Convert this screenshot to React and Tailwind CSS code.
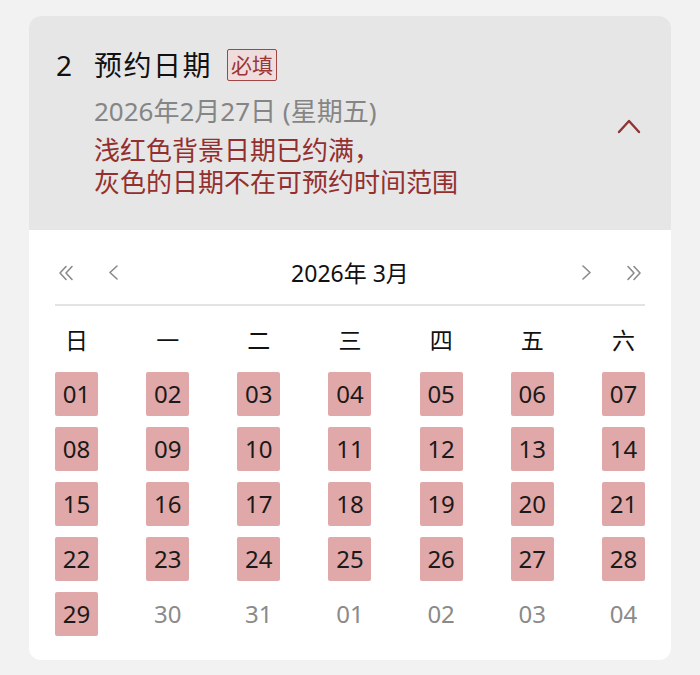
import React from 'react'

const FONT = { fontFamily: '"Noto Sans", "Noto Sans CJK SC", sans-serif' }

const weekdays = ['日', '一', '二', '三', '四', '五', '六']

// 三月的日期，29 之后是不可预约的灰色日期
const rows = [
  ['01', '02', '03', '04', '05', '06', '07'],
  ['08', '09', '10', '11', '12', '13', '14'],
  ['15', '16', '17', '18', '19', '20', '21'],
  ['22', '23', '24', '25', '26', '27', '28'],
  ['29', '30', '31', '01', '02', '03', '04'],
]

function Chevron({ dir = 'left', double = false }) {
  const single = dir === 'left' ? 'M9 1 L2 7.5 L9 14' : 'M2 1 L9 7.5 L2 14'
  return (
    <svg width={double ? 16 : 11} height="16" viewBox={double ? '0 0 16 16' : '0 0 11 16'} fill="none" stroke="#8a8a8a" strokeWidth="1.6" strokeLinecap="round" strokeLinejoin="round">
      {double ? (
        dir === 'left' ? (
          <>
            <path d="M8 1.5 L2 8 L8 14.5" />
            <path d="M14 1.5 L8 8 L14 14.5" />
          </>
        ) : (
          <>
            <path d="M2 1.5 L8 8 L2 14.5" />
            <path d="M8 1.5 L14 8 L8 14.5" />
          </>
        )
      ) : (
        <path d={single} />
      )}
    </svg>
  )
}

function DayCell({ day, booked }) {
  if (booked) {
    return (
      <div className="w-[43px] h-[44px] rounded-[2px] bg-[#e0a8a8] flex items-center justify-center text-[24px] leading-none text-[#1a1a1a]">
        {day}
      </div>
    )
  }
  return (
    <div className="w-[43px] h-[44px] flex items-center justify-center text-[24px] leading-none text-[#8a8a8a]">
      {day}
    </div>
  )
}

export default function App() {
  return (
    <div className="min-h-screen bg-[#f2f2f2] px-[29px] pt-4 pb-4" style={FONT}>
      <div className="rounded-[12px] overflow-hidden bg-white">
        {/* 头部：标题与说明 */}
        <div className="bg-[#e6e6e6] pl-[27px] pr-[30px] pt-[31px] pb-[32px] flex items-center">
          <div className="flex-1">
            <div className="flex items-center h-[36px]">
              <span className="w-[38px] text-[28px] leading-none text-[#111]">2</span>
              <span className="text-[28px] leading-none text-[#111] tracking-[1.5px]">预约日期</span>
              <span className="ml-[15px] h-[32px] px-[3px] flex items-center border-[1.5px] border-[#a34545] bg-[#efdcdc] text-[#9a3636] text-[21px] leading-none rounded-[2px]">
                必填
              </span>
            </div>
            <div className="pl-[38px]">
              <p className="mt-[12px] text-[26px] leading-[32px] text-[#858585]">2026年2月27日 (星期五)</p>
              <p className="mt-[7px] text-[26px] leading-[32px] text-[#93302f]">
                浅红色背景日期已约满，
                <br />
                灰色的日期不在可预约时间范围
              </p>
            </div>
          </div>
          <svg className="mt-[6px]" width="24" height="16" viewBox="0 0 24 16" fill="none" stroke="#8f3434" strokeWidth="2.4" strokeLinecap="round" strokeLinejoin="round">
            <path d="M2 14 L12 3 L22 14" />
          </svg>
        </div>

        {/* 日历 */}
        <div className="px-[26px] pt-[23px] pb-[24px]">
          <div className="flex items-center h-[40px] px-[3px] mb-[11px]">
            <div className="flex items-center gap-[34px]">
              <Chevron dir="left" double />
              <Chevron dir="left" />
            </div>
            <div className="flex-1 text-center text-[23px] leading-none text-[#111]">2026年 3月</div>
            <div className="flex items-center gap-[34px]">
              <Chevron dir="right" />
              <Chevron dir="right" double />
            </div>
          </div>
          <div className="h-[2px] bg-[#e3e3e3]" />

          <div className="mt-[20px] flex justify-between">
            {weekdays.map((w) => (
              <div key={w} className="w-[43px] h-[28px] flex items-center justify-center text-[23px] leading-none text-[#111]">
                {w}
              </div>
            ))}
          </div>

          <div className="mt-[18px] flex flex-col gap-[11px]">
            {rows.map((row, ri) => (
              <div key={ri} className="flex justify-between">
                {row.map((d, ci) => (
                  <DayCell key={ci} day={d} booked={ri < 4 || ci === 0} />
                ))}
              </div>
            ))}
          </div>
        </div>
      </div>
    </div>
  )
}
